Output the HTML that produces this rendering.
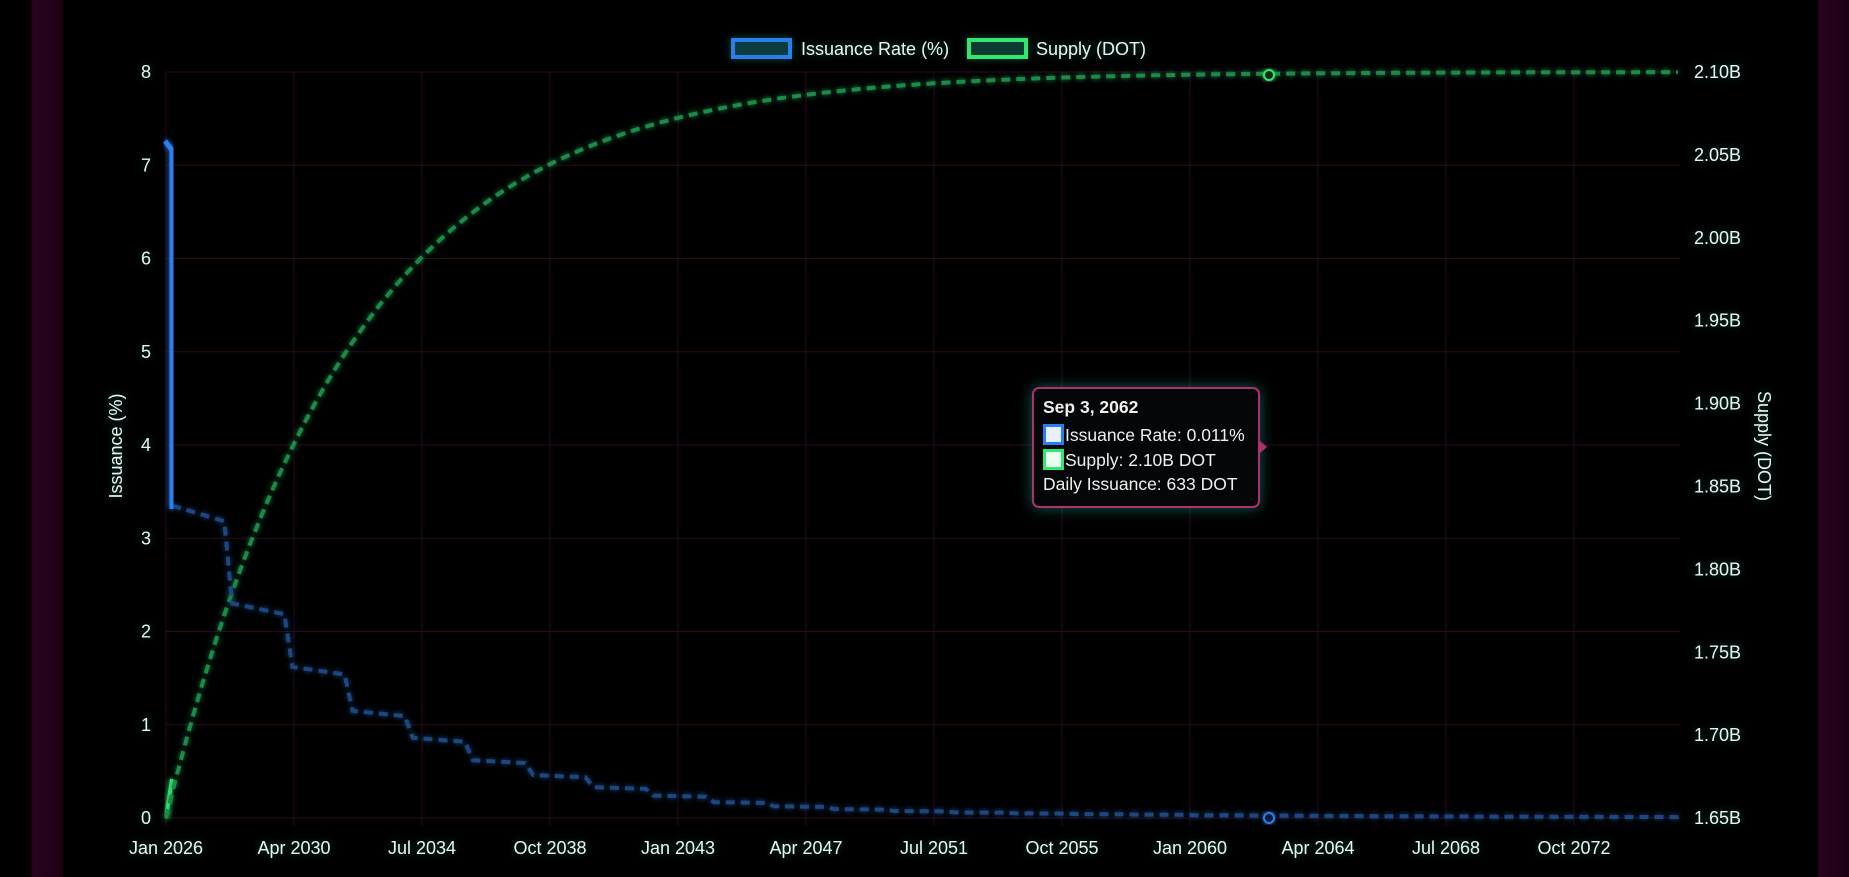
<!DOCTYPE html>
<html><head><meta charset="utf-8"><style>
html,body{margin:0;padding:0;background:#000;width:1849px;height:877px;overflow:hidden;font-family:"Liberation Sans",sans-serif}
.bar{position:absolute;top:0;height:877px}
svg text{font-family:"Liberation Sans",sans-serif;fill:#e8f4f0}
#tip{position:absolute;left:1032px;top:387px;width:228px;height:121px;border:2px solid #b0306e;border-radius:7px;background:#050607;box-shadow:0 0 14px rgba(40,200,180,.45);color:#f0f0f0;font-size:17.5px;box-sizing:border-box}
#tip .t{position:absolute;left:9px;top:8px;font-weight:bold}
#tip .l{position:absolute;left:9px;white-space:nowrap}
#tip .sw{display:inline-block;width:15px;height:15px;border:3px solid;vertical-align:-4px;background:#e8f0ff;margin-right:1px}
#arrow{position:absolute;left:1260px;top:441px;width:0;height:0;border-top:6px solid transparent;border-bottom:6px solid transparent;border-left:7px solid #b0306e}
</style></head><body>
<div class="bar" style="left:0;width:63px;background:linear-gradient(90deg,#000 0,#000 30px,#2a0420 33px,#1c0014 63px)"></div>
<div class="bar" style="left:1818px;width:31px;background:linear-gradient(90deg,#2a0420,#1c0014)"></div>
<svg id="s" width="1849" height="877" style="position:absolute;left:0;top:0">
<defs>
<filter id="g" x="-20%" y="-20%" width="140%" height="140%"><feGaussianBlur stdDeviation="3" result="b"/><feMerge><feMergeNode in="b"/><feMergeNode in="SourceGraphic"/></feMerge></filter>
<filter id="tg" x="-30%" y="-50%" width="160%" height="200%"><feGaussianBlur stdDeviation="4" result="b"/><feFlood flood-color="#1a6a5a" flood-opacity=".7"/><feComposite in2="b" operator="in" result="c"/><feMerge><feMergeNode in="c"/><feMergeNode in="SourceGraphic"/></feMerge></filter>
</defs>
<g id="grid"></g><g id="lbl" filter="url(#tg)"></g><g id="lines"></g>
</svg>
<div id="tip">
<div class="t">Sep 3, 2062</div>
<div class="l" style="top:35px"><span class="sw" style="border-color:#2a7ff0"></span>Issuance Rate: 0.011%</div>
<div class="l" style="top:60px"><span class="sw" style="border-color:#2ee870;background:#e8fff0"></span>Supply: 2.10B DOT</div>
<div class="l" style="top:85px">Daily Issuance: 633 DOT</div>
</div>
<div id="arrow"></div>
<script>
var ns="http://www.w3.org/2000/svg";
function el(p,t,a,txt){var e=document.createElementNS(ns,t);for(var k in a)e.setAttribute(k,a[k]);if(txt!=null)e.textContent=txt;document.getElementById(p).appendChild(e);return e;}
var L=166,R=1680,T=72,B=818,gx=128,FS=18;
for(var i=0;i<=8;i++){var y=T+i*93.25;el("grid","line",{x1:L,x2:R,y1:y,y2:y,stroke:"#2c0a20","stroke-width":1});
el("lbl","text",{x:151,y:y+6,"text-anchor":"end","font-size":FS},String(8-i));}
var xl=["Jan 2026","Apr 2030","Jul 2034","Oct 2038","Jan 2043","Apr 2047","Jul 2051","Oct 2055","Jan 2060","Apr 2064","Jul 2068","Oct 2072"];
for(var i=0;i<12;i++){var x=L+i*gx;el("grid","line",{x1:x,x2:x,y1:T,y2:B+8,stroke:"#2c0a20","stroke-width":1});
el("lbl","text",{x:x,y:854,"text-anchor":"middle","font-size":FS},xl[i]);}
var rl=["2.10B","2.05B","2.00B","1.95B","1.90B","1.85B","1.80B","1.75B","1.70B","1.65B"];
for(var i=0;i<10;i++){el("lbl","text",{x:1694,y:T+i*82.9+6,"font-size":FS},rl[i]);}
el("lbl","text",{x:0,y:0,"font-size":FS,"text-anchor":"middle",transform:"translate(122,446) rotate(-90)"},"Issuance (%)");
el("lbl","text",{x:0,y:0,"font-size":FS,"text-anchor":"middle",transform:"translate(1758,446) rotate(90)"},"Supply (DOT)");
// legend
el("lbl","rect",{x:733,y:40,width:57,height:17,fill:"#0d3a40",stroke:"#2a7ff0","stroke-width":4});
el("lbl","text",{x:801,y:55,"font-size":FS},"Issuance Rate (%)");
el("lbl","rect",{x:969,y:40,width:57,height:17,fill:"#0d3a30",stroke:"#2ee870","stroke-width":4});
el("lbl","text",{x:1036,y:55,"font-size":FS},"Supply (DOT)");
// supply
var pxy=gx/4.25;
function sy(v){return B-(v-1.65)/0.05*82.9;}
var d="";for(var t=0;t<=50.3;t+=0.1){var v=2.10-0.45*Math.exp(-t/6.1);var x=L+t*pxy,y=sy(v);d+=(t==0?"M":"L")+x.toFixed(1)+","+y.toFixed(1);}
el("lines","path",{d:"M166,818 L172,779",stroke:"#2ee870","stroke-width":4,fill:"none",filter:"url(#g)"});
el("lines","path",{d:d,stroke:"#1f8a48","stroke-width":4,fill:"none","stroke-dasharray":"9 6",filter:"url(#g)"});
// issuance
function iy(v){return B-v*93.25;}
var vals=[3.35,2.3,1.62,1.15,0.86,0.62,0.46,0.33,0.24,0.17,0.125,0.095,0.075,0.06,0.05,0.042,0.036,0.03,0.026,0.022,0.019,0.016,0.014,0.012,0.011];
var d2="M172,"+iy(3.35).toFixed(1);var x=172;
for(var i=0;i<vals.length;i++){var v=vals[i],x2=x+60.2-8;if(x2>R)x2=R;d2+=" L"+x2.toFixed(1)+","+iy(v*0.95).toFixed(1);if(x2>=R)break;
var nv=vals[i+1]||0.01;x=x2+8;d2+=" L"+x.toFixed(1)+","+iy(nv).toFixed(1);}
d2+=" L"+R+","+iy(0.01).toFixed(1);
el("lines","path",{d:d2,stroke:"#1c4680","stroke-width":4,fill:"none","stroke-dasharray":"9 6",filter:"url(#g)"});
el("lines","path",{d:"M165,141 L172,150 L172,509",stroke:"#2a7ff0","stroke-width":5,fill:"none","stroke-linejoin":"round",filter:"url(#g)"});
el("lines","circle",{cx:1269,cy:75,r:5,fill:"#0a2a18",stroke:"#2ee870","stroke-width":2,filter:"url(#g)"});
el("lines","circle",{cx:1269,cy:818,r:5,fill:"#0a1a30",stroke:"#2a7ff0","stroke-width":2,filter:"url(#g)"});
</script>
</body></html>
